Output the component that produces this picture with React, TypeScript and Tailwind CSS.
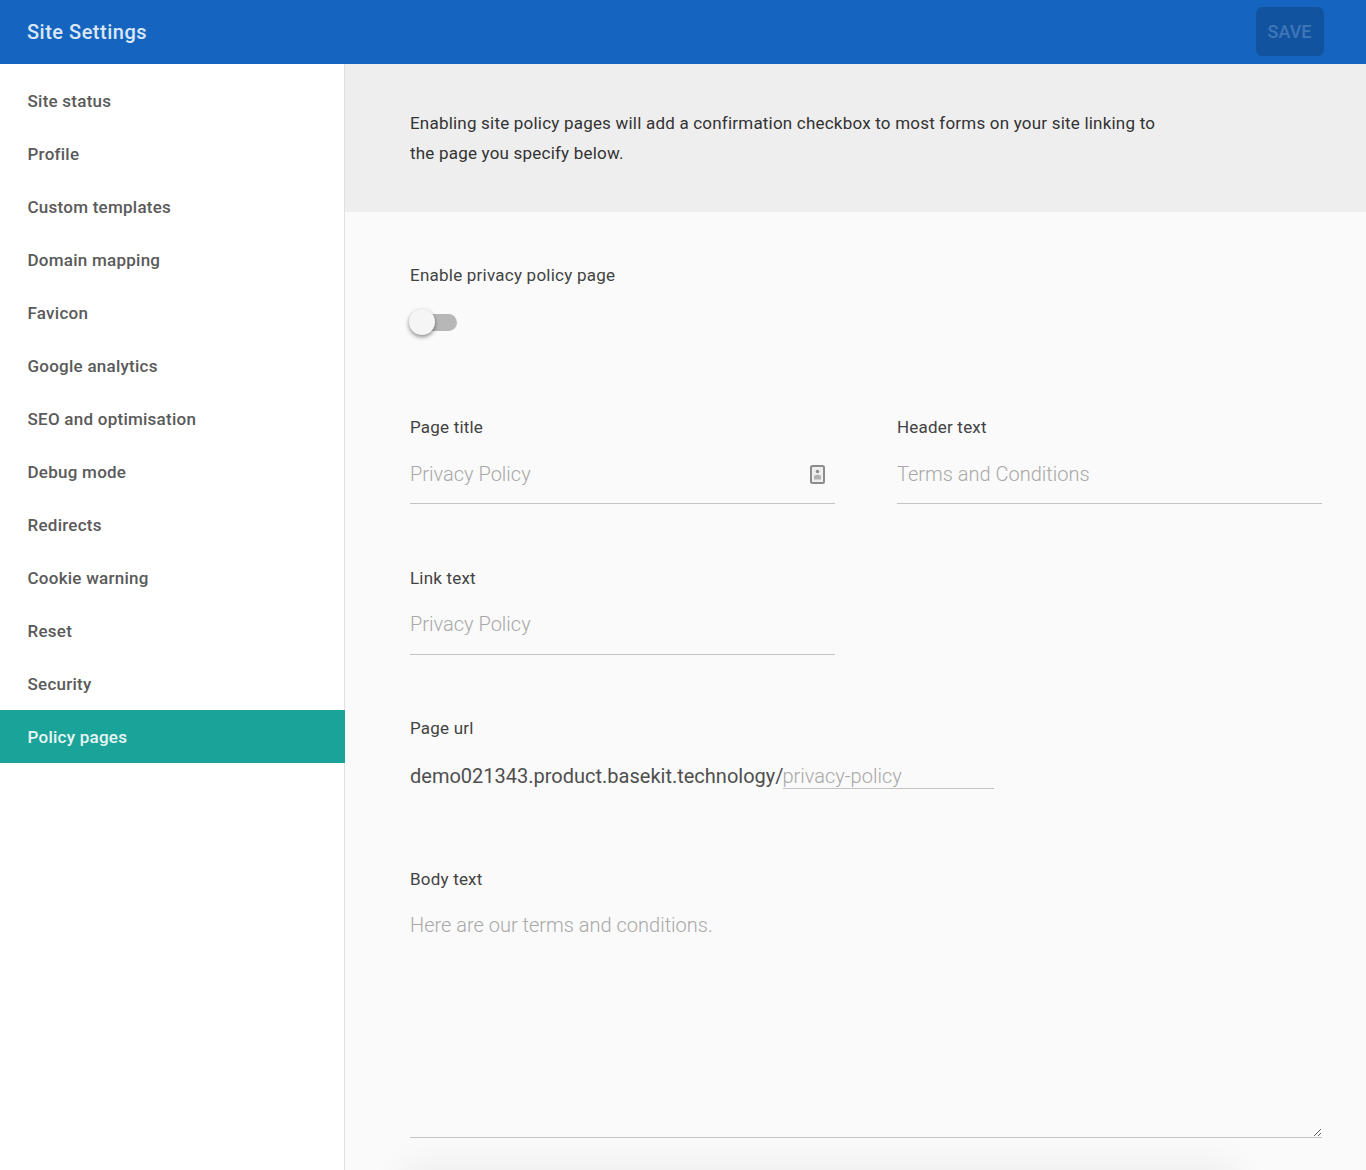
const navItems = [
  "Site status",
  "Profile",
  "Custom templates",
  "Domain mapping",
  "Favicon",
  "Google analytics",
  "SEO and optimisation",
  "Debug mode",
  "Redirects",
  "Cookie warning",
  "Reset",
  "Security",
  "Policy pages",
];

function ContactIcon() {
  return (
    <svg width="15" height="19" viewBox="0 0 15 19" className="shrink-0">
      <rect x="1" y="1" width="13" height="17" rx="1.5" fill="#efefef" stroke="#8c8c8c" strokeWidth="2" />
      <circle cx="7.5" cy="6.5" r="1.8" fill="#8f8f8f" />
      <path d="M4 14.5v-3c0-1 1.6-1.7 3.5-1.7s3.5.7 3.5 1.7v3z" fill="#b0b0b0" />
    </svg>
  );
}

function TextField({ label, placeholder, icon, raised }: { label: string; placeholder: string; icon?: boolean; raised?: boolean }) {
  return (
    <div className="w-[425px]">
      <label className="block text-[17px] leading-[24px] tracking-[0.2px] text-[#424242]">{label}</label>
      <div className={`mt-[12px] flex h-[53px] items-center border-b border-[#c4c4c4] ${raised ? "pb-[8px]" : "pb-[6px]"}`}>
        <input
          placeholder={placeholder}
          className="w-full bg-transparent text-[20px] font-light outline-none placeholder:text-[#a8a8a8]"
        />
        {icon && (
          <span className="mr-[10px] mt-[1px]">
            <ContactIcon />
          </span>
        )}
      </div>
    </div>
  );
}

export default function App() {
  return (
    <div className="flex h-[1170px] flex-col overflow-hidden font-['Roboto',sans-serif]">
      {/* Top bar */}
      <header className="flex h-[64px] shrink-0 items-center justify-between bg-[#1565c0] pl-[27px] pr-[42.5px]">
        <h1 className="text-[20px] font-medium tracking-[0.5px] text-[#dbe7f6]">Site Settings</h1>
        <button className="mb-[1px] h-[49px] w-[68px] rounded-[6px] bg-[#12539f] text-[18px] font-medium text-[#3f76b8]">
          SAVE
        </button>
      </header>

      <div className="flex min-h-0 flex-1">
        {/* Sidebar */}
        <nav className="w-[345px] shrink-0 border-r border-[#e0e0e0] bg-white pt-[10px]">
          {navItems.map((item) => (
            <a
              key={item}
              href="#"
              className={`flex h-[53px] items-center pl-[27.5px] pt-[2px] text-[17px] font-medium tracking-[0.25px] ${
                item === "Policy pages" ? "mr-[-1px] bg-[#1aa398] text-white/90" : "text-[#5a5a5a]"
              }`}
            >
              {item}
            </a>
          ))}
        </nav>

        {/* Content */}
        <main className="relative min-w-0 flex-1 overflow-hidden bg-[#fafafa]">
          <div className="h-[148px] bg-[#eeeeee] pl-[65px] pt-[44px] text-[17px] leading-[30px] tracking-[0.205px] text-[#333333]">
            <p className="w-[760px]">
              Enabling site policy pages will add a confirmation checkbox to most forms on your site linking to the page you specify below.
            </p>
          </div>

          <div className="pl-[65px] pr-[44px] pt-[51px]">
            <label className="block text-[17px] leading-[24px] tracking-[0.23px] text-[#424242]">Enable privacy policy page</label>
            <div className="relative mt-[22px] h-[26px] w-[48px]">
              <div className="absolute left-[4px] top-[5px] h-[17px] w-[43px] rounded-full bg-[#b7b7b7]" />
              <div className="absolute left-[-1px] top-0 h-[26px] w-[26px] rounded-full bg-[#f5f5f5] shadow-[0_2px_4px_rgba(0,0,0,0.45)]" />
            </div>

            <div className="mt-[80px] flex gap-[62px]">
              <TextField label="Page title" placeholder="Privacy Policy" icon />
              <TextField label="Header text" placeholder="Terms and Conditions" />
            </div>

            <div className="mt-[62px]">
              <TextField label="Link text" placeholder="Privacy Policy" raised />
            </div>

            <div className="mt-[61px]">
              <label className="block text-[17px] leading-[24px] tracking-[0.2px] text-[#424242]">Page url</label>
              <div className="mt-[21px] flex items-center text-[20px] text-[#4f4f4f]">
                <span>demo021343.product.basekit.technology/</span>
                <input
                  placeholder="privacy-policy"
                  className="ml-[-1px] h-[25px] w-[211px] border-b border-[#c4c4c4] bg-transparent font-light outline-none placeholder:text-[#a8a8a8]"
                />
              </div>
            </div>

            <div className="mt-[76px]">
              <label className="block text-[17px] leading-[24px] tracking-[0.2px] text-[#424242]">Body text</label>
              <textarea
                placeholder="Here are our terms and conditions."
                className="mt-[19px] block h-[228px] w-full border-b border-[#c4c4c4] bg-transparent text-[20px] font-light outline-none placeholder:text-[#a8a8a8]"
              />
            </div>
          </div>

          {/* Scroll shadow */}
          <div className="absolute bottom-[-40px] left-[60px] right-[130px] h-[40px] shadow-[0_0_40px_rgba(0,0,0,0.07)]" />
        </main>
      </div>
    </div>
  );
}
